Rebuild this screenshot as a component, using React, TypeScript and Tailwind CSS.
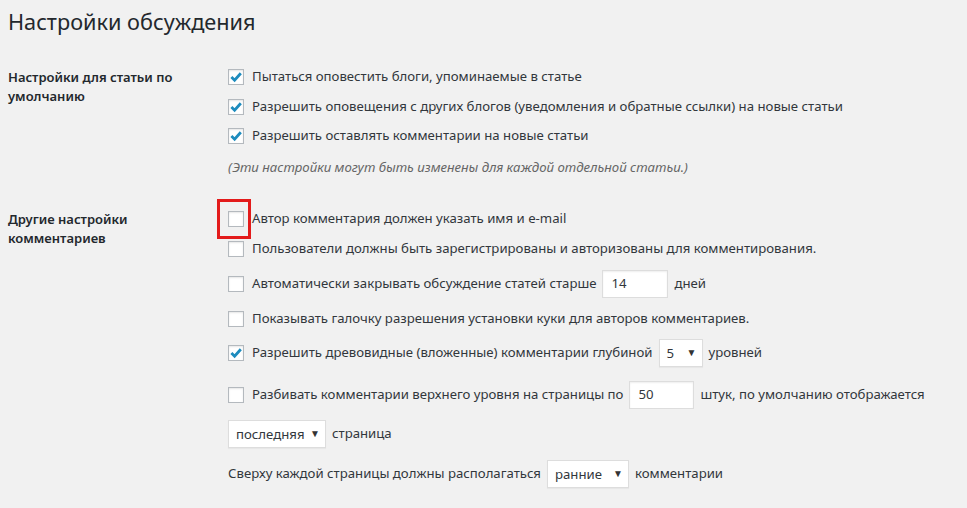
import React from "react";

const font = { fontFamily: '"Noto Sans", "Open Sans", sans-serif' };

function Check({ checked }: { checked?: boolean }) {
  return (
    <span className="inline-flex w-[16px] h-[16px] shrink-0 bg-white border border-[#b4b9be] shadow-[inset_0_1px_2px_rgba(0,0,0,0.1)] items-center justify-center mr-[8px]">
      {checked && (
        <svg width="14" height="14" viewBox="0 0 14 14">
          <path d="M2.4 7 L5.6 10.2 L11.8 3.2" stroke="#1e8cbe" strokeWidth="2.8" fill="none" strokeLinecap="butt" strokeLinejoin="miter" />
        </svg>
      )}
    </span>
  );
}

function TextInput({ value, w }: { value: string; w: string }) {
  return (
    <span className={`inline-flex items-center h-[28px] bg-white border border-[#ddd] shadow-[inset_0_1px_2px_rgba(0,0,0,0.07)] px-[8px] mx-[6px] text-[#32373c] ${w}`}>
      {value}
    </span>
  );
}

function Select({ value, w }: { value: string; w: string }) {
  return (
    <span className={`inline-flex items-center justify-between h-[28px] bg-white border border-[#ddd] shadow-[0_1px_1px_rgba(0,0,0,0.04)] pl-[7px] pr-[5px] mx-[6px] text-[#32373c] ${w}`}>
      <span className="pt-[2px]">{value}</span>
      <span className="text-[10px] text-[#333] pb-[2px]">▼</span>
    </span>
  );
}

export default function App() {
  return (
    <div className="w-[967px] h-[508px] bg-[#f1f1f1] text-[#23282d] overflow-hidden" style={font}>
      <h1 className="pl-[8px] pt-[7px] text-[21.7px] leading-[30px] font-normal text-[#23282d]">Настройки обсуждения</h1>

      <div className="flex mt-[25px]">
        <div className="w-[220px] pl-[8px] pt-[6px] text-[13px] leading-[19px] font-semibold">
          Настройки для статьи по
          <br />
          умолчанию
        </div>
        <div className="flex flex-col pl-[8px] text-[13.2px] text-[#32373c]">
          <div className="h-[29.7px] flex items-center"><Check checked />Пытаться оповестить блоги, упоминаемые в статье</div>
          <div className="h-[29.7px] flex items-center"><Check checked />Разрешить оповещения с других блогов (уведомления и обратные ссылки) на новые статьи</div>
          <div className="h-[29.7px] flex items-center"><Check checked />Разрешить оставлять комментарии на новые статьи</div>
          <div className="h-[33px] flex items-center italic text-[#666]">(Эти настройки могут быть изменены для каждой отдельной статьи.)</div>
        </div>
      </div>

      <div className="flex mt-[20px]">
        <div className="w-[220px] pl-[8px] pt-[6px] text-[13px] leading-[19px] font-semibold">
          Другие настройки
          <br />
          комментариев
        </div>
        <div className="flex flex-col pl-[8px] text-[13.2px] text-[#32373c]">
          <div className="h-[30px] flex items-center relative">
            <Check />Автор комментария должен указать имя и e-mail
            <span className="absolute left-[-11px] top-[-5px] w-[34px] h-[40px] border-[3px] border-[#e31b1b]" />
          </div>
          <div className="h-[30px] flex items-center"><Check />Пользователи должны быть зарегистрированы и авторизованы для комментирования.</div>
          <div className="h-[40px] flex items-center"><Check />Автоматически закрывать обсуждение статей старше<TextInput value="14" w="w-[66px]" />дней</div>
          <div className="h-[30px] flex items-center"><Check />Показывать галочку разрешения установки куки для авторов комментариев.</div>
          <div className="h-[38px] flex items-center"><Check checked />Разрешить древовидные (вложенные) комментарии глубиной<Select value="5" w="w-[44px]" />уровней</div>
          <div className="h-[46px] flex items-center"><Check />Разбивать комментарии верхнего уровня на страницы по<TextInput value="50" w="w-[65px]" />штук, по умолчанию отображается</div>
          <div className="h-[32px] flex items-center ml-[-6px]"><Select value="последняя" w="w-[98px]" />страница</div>
          <div className="h-[48px] flex items-center">Сверху каждой страницы должны располагаться<Select value="ранние" w="w-[82px]" />комментарии</div>
        </div>
      </div>
    </div>
  );
}
